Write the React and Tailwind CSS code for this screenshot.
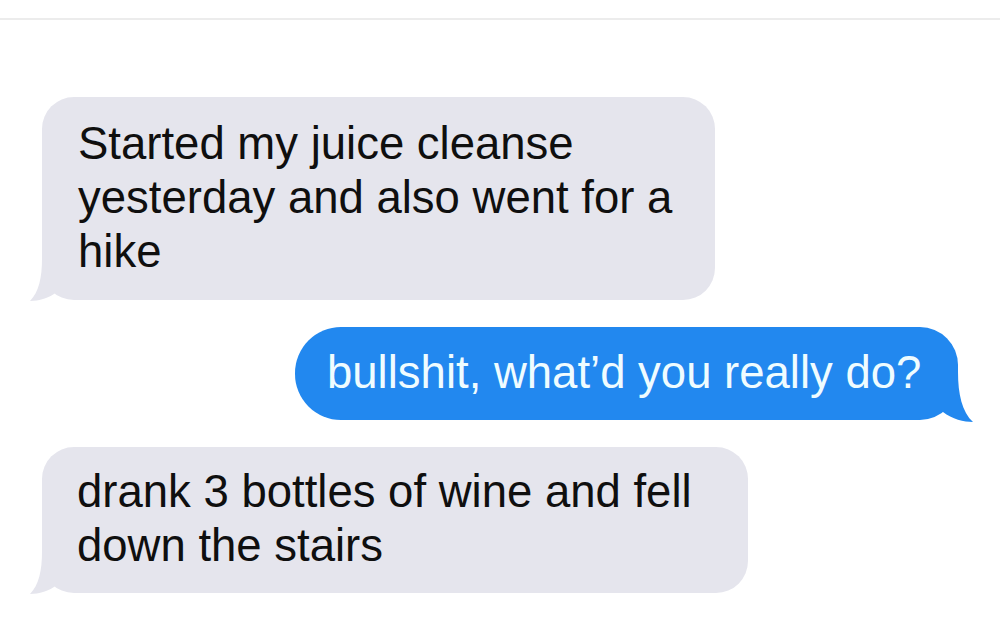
export default function App() {
  const font = { fontFamily: '"Liberation Sans", Arial, sans-serif' };
  return (
    <div className="w-[1000px] h-[641px] bg-white overflow-hidden" style={font}>
      <div className="h-[20px] border-b-2 border-[#ececec]" />
      <div className="flex flex-col pt-[77px] gap-[27px]">
        {/* Bubble 1 */}
        <div className="relative self-start ml-[42px] w-[673px] rounded-[32px] bg-[#e5e5ed] pl-[36px] pt-[20px] pb-[21px] text-[45.5px] leading-[54px] text-[#0f0f0f] whitespace-nowrap">
          Started my juice cleanse
          <br />
          yesterday and also went for a
          <br />
          hike
          <svg className="absolute left-[-12px] bottom-[-1px] w-[27px] h-[42px]" viewBox="0 0 27 42">
            <path d="M12 0 C12 18 9 33 0 42 C9 42 19 39 27 33 L27 0 Z" fill="#e5e5ed" />
          </svg>
        </div>

        {/* Blue bubble */}
        <div className="relative self-end mr-[42px] w-[663px] rounded-l-[46px] rounded-r-[38px] bg-[#2288ef] pl-[32px] pt-[19px] pb-[20px] text-[45.5px] leading-[54px] text-[#effcff] whitespace-nowrap">
          bullshit, what’d you really do?
          <svg className="absolute right-[-15px] bottom-[-2px] w-[30px] h-[50px]" viewBox="0 0 30 50">
            <path d="M15 0 C15 22 19 40 30 50 C21 50 9 47 0 40 L0 0 Z" fill="#2288ef" />
          </svg>
        </div>

        {/* Bubble 3 */}
        <div className="relative self-start ml-[42px] w-[706px] rounded-[32px] bg-[#e5e5ed] pl-[35px] pt-[18px] pb-[20px] text-[45.5px] leading-[54px] text-[#0f0f0f] whitespace-nowrap">
          drank 3 bottles of wine and fell
          <br />
          down the stairs
          <svg className="absolute left-[-12px] bottom-[-1px] w-[27px] h-[42px]" viewBox="0 0 27 42">
            <path d="M12 0 C12 18 9 33 0 42 C9 42 19 39 27 33 L27 0 Z" fill="#e5e5ed" />
          </svg>
        </div>
      </div>
    </div>
  );
}
